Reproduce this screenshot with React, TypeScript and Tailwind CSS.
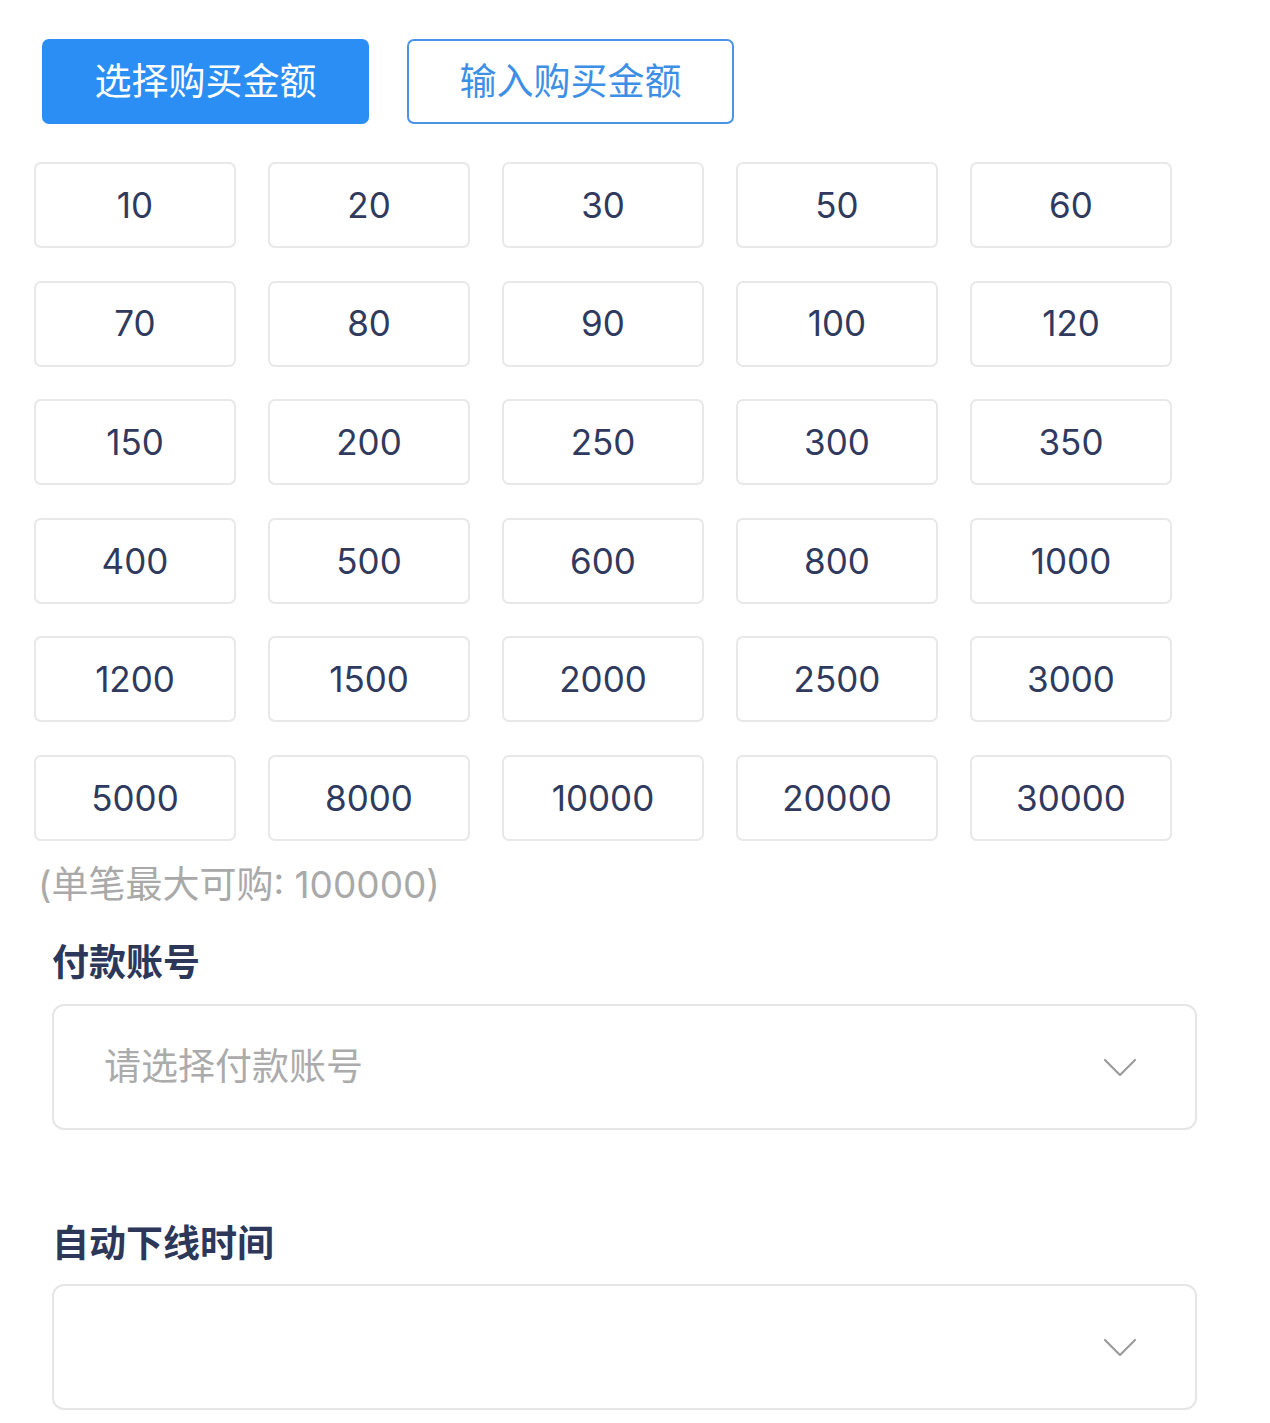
import React from "react";

const amounts = [
  "10","20","30","50","60",
  "70","80","90","100","120",
  "150","200","250","300","350",
  "400","500","600","800","1000",
  "1200","1500","2000","2500","3000",
  "5000","8000","10000","20000","30000",
];

const font = { fontFamily: 'Inter, "Noto Sans CJK SC", sans-serif' };

function Chevron() {
  return (
    <svg width="34" height="22" viewBox="0 0 34 22" fill="none">
      <path d="M2 3 L17 18 L32 3" stroke="#9c9c9c" strokeWidth="2.2" strokeLinecap="round" strokeLinejoin="round" />
    </svg>
  );
}

function Select({ placeholder }: { placeholder?: string }) {
  return (
    <div className="ml-[52px] w-[1145px] h-[126px] border-2 border-[#e6e6e6] rounded-[12px] flex items-center justify-between pl-[50px] pr-[58px]">
      <span className="text-[37px] text-[#ababab] leading-none">{placeholder ?? ""}</span>
      <span className="mt-[3px]">
        <Chevron />
      </span>
    </div>
  );
}

export default function App() {
  return (
    <div className="w-[1270px] min-h-[1423px] bg-white" style={font}>
      <div className="pt-[39px] pl-[42px] flex gap-[38px]">
        <div className="w-[327px] h-[85px] rounded-[7px] bg-[#2b8ef5] text-white text-[37px] flex items-center justify-center">
          选择购买金额
        </div>
        <div className="w-[327px] h-[85px] rounded-[7px] border-2 border-[#4b93e6] text-[#3d8fe6] text-[37px] flex items-center justify-center">
          输入购买金额
        </div>
      </div>
      <div className="mt-[38px] pl-[34px] grid grid-cols-[repeat(5,202px)] gap-x-[32px] gap-y-[32.6px]">
        {amounts.map((a) => (
          <div
            key={a}
            className="h-[86px] border-2 border-[#e8e8ea] rounded-[7px] flex items-center justify-center text-[35px] text-[#2f3a5e]"
          >
            {a}
          </div>
        ))}
      </div>
      <div className="pl-[38px] mt-[20px] h-[48px] flex items-center text-[37px] text-[#a9a9a9] leading-none">
        (单笔最大可购: 100000)
      </div>
      <div className="pl-[52px] mt-[32px] h-[44px] flex items-center text-[37px] font-bold text-[#2c3759] leading-none">
        付款账号
      </div>
      <div className="mt-[19px]">
        <Select placeholder="请选择付款账号" />
      </div>
      <div className="pl-[52px] mt-[92px] h-[44px] flex items-center text-[37px] font-bold text-[#2c3759] leading-none">
        自动下线时间
      </div>
      <div className="mt-[18px]">
        <Select />
      </div>
    </div>
  );
}
